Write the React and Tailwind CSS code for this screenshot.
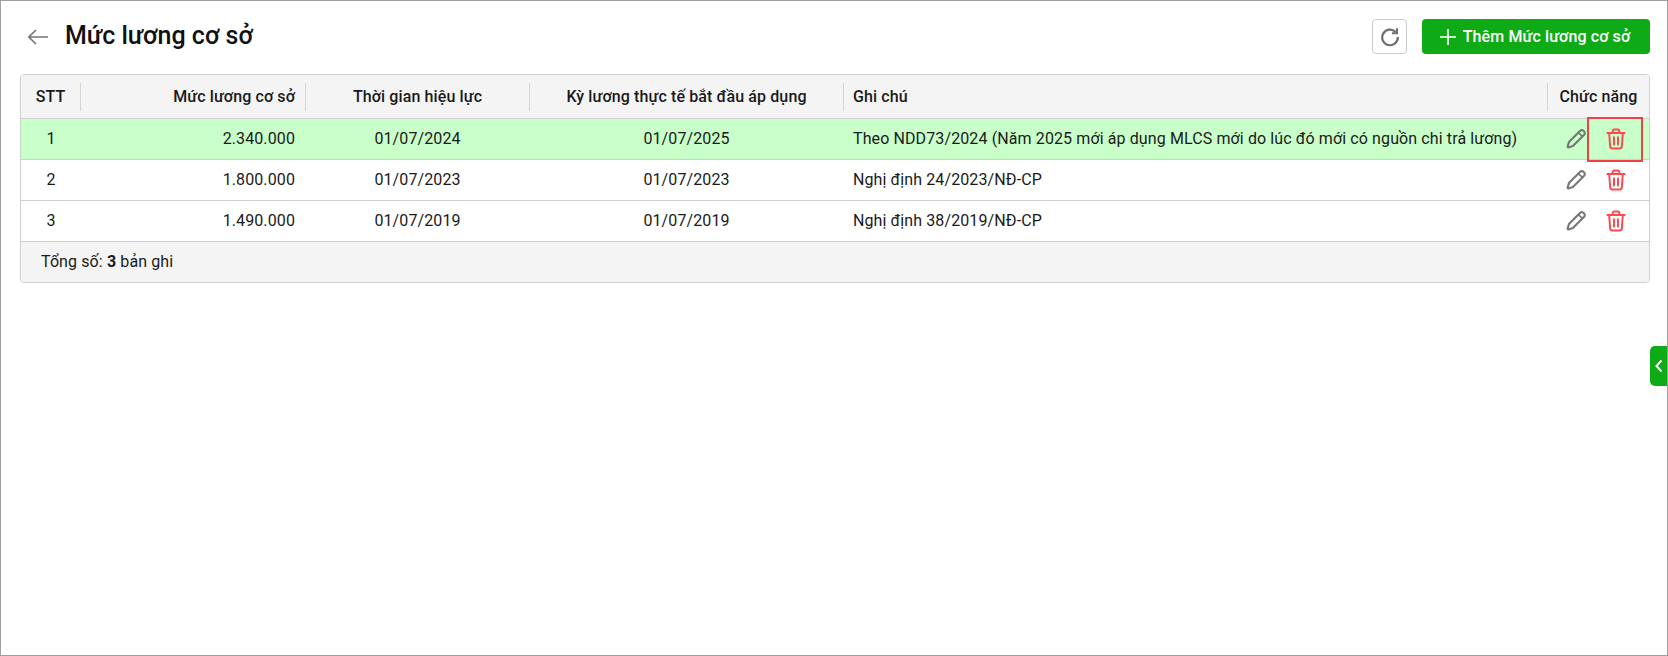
const rows = [
  { stt: 1, luong: "2.340.000", hieuLuc: "01/07/2024", apDung: "01/07/2025", ghiChu: "Theo NDD73/2024 (Năm 2025 mới áp dụng MLCS mới do lúc đó mới có nguồn chi trả lương)" },
  { stt: 2, luong: "1.800.000", hieuLuc: "01/07/2023", apDung: "01/07/2023", ghiChu: "Nghị định 24/2023/NĐ-CP" },
  { stt: 3, luong: "1.490.000", hieuLuc: "01/07/2019", apDung: "01/07/2019", ghiChu: "Nghị định 38/2019/NĐ-CP" },
];

const cols = "grid grid-cols-[60px_225px_224px_314px_704px_1fr]";

function PencilIcon() {
  return (
    <svg width="22" height="22" viewBox="0 0 20 20" fill="none" stroke="#777" strokeWidth="1.9" strokeLinejoin="round">
      <path d="M13.800 2.600a2.100 2.100 0 0 1 3 0l.6.6a2.100 2.100 0 0 1 0 3L7.200 16.400l-4.200 1.300-.7-.7L3.600 12.800z" />
      <path d="M12.300 4.200l3.500 3.500" strokeWidth="1.500" />
    </svg>
  );
}

function TrashIcon() {
  return (
    <svg width="22" height="22" viewBox="0 0 20 20" fill="none" stroke="#fb4a50" strokeWidth="1.8" strokeLinecap="round" strokeLinejoin="round">
      <path d="M2.200 4.600h15.600" />
      <path d="M7 4.400V2.600a1.200 1.200 0 0 1 1.200-1.200h3.600A1.200 1.200 0 0 1 13 2.600v1.800" />
      <path d="M3.800 4.800l.9 12a2 2 0 0 0 2 1.900h6.600a2 2 0 0 0 2-1.900l.9-12" />
      <path d="M8.200 8.400v6.600M11.800 8.400v6.600" />
    </svg>
  );
}

function HeaderCell({ children, className = "", last = false }) {
  return (
    <div className="flex items-center h-full">
      <div className={`flex-1 px-[10px] font-medium text-[#1a1a1a] whitespace-nowrap ${className}`}>
        {children}
      </div>
      {!last && <div className="w-px h-[28px] bg-[#d4d4d4]" />}
    </div>
  );
}

export default function App() {
  return (
    <div className="h-[656px] w-[1668px] bg-white border border-[#a0a0a0] overflow-hidden relative font-['Roboto',sans-serif] text-[16px] tracking-[0.11px] text-[#1a1a1a]">
      <div className="flex items-center h-[73px] pb-[2px] pl-[25px] pr-[17px]">
        <svg width="24" height="24" viewBox="0 0 24 24" fill="none" stroke="#757575" strokeWidth="1.7" className="mr-[15px]">
          <path d="M22 12H2.500M10 5l-7.200 7 7.200 7" />
        </svg>
        <h1 className="font-medium text-[25px] tracking-normal text-[#111] -mt-[2px]">Mức lương cơ sở</h1>
        <button className="ml-auto w-[35px] h-[35px] flex items-center justify-center rounded-[4px] border border-[#ccc] bg-white">
          <svg width="20" height="20" viewBox="0 0 20 20" fill="none" stroke="#6e6e6e" strokeWidth="2.200">
            <path d="M15.600 5A7.800 7.800 0 1 0 17.800 10" />
            <path d="M17 1.200v5h-5" strokeWidth="2" />
          </svg>
        </button>
        <button className="ml-[15px] w-[228px] h-[35px] flex items-center justify-center gap-[7px] pr-[2px] rounded-[4px] bg-[#0fab16] text-white font-medium">
          <svg width="16" height="16" viewBox="0 0 16 16" stroke="white" strokeWidth="1.700">
            <path d="M8 0v16M0 8h16" />
          </svg>
          Thêm Mức lương cơ sở
        </button>
      </div>

      <div className="ml-[19px] mr-[17px] border border-[#cfcfcf] rounded-[4px] overflow-hidden">
        <div className={`${cols} h-[44px] bg-[#f4f4f4] border-b border-[#cfcfcf]`}>
          <HeaderCell className="text-center">STT</HeaderCell>
          <HeaderCell className="text-right">Mức lương cơ sở</HeaderCell>
          <HeaderCell className="text-center">Thời gian hiệu lực</HeaderCell>
          <HeaderCell className="text-center">Kỳ lương thực tế bắt đầu áp dụng</HeaderCell>
          <HeaderCell className="pl-[9px]">Ghi chú</HeaderCell>
          <HeaderCell className="text-center" last>Chức năng</HeaderCell>
        </div>

        {rows.map((row, index) => (
          <div
            key={row.stt}
            className={`${cols} h-[41px] items-center border-b border-[#cfcfcf] ${index === 0 ? "bg-[#c9ffc9]" : "bg-white"}`}
          >
            <div className="px-[10px] text-center">{row.stt}</div>
            <div className="pl-[10px] pr-[11px] text-right">{row.luong}</div>
            <div className="pl-[10px] pr-[11px] text-center">{row.hieuLuc}</div>
            <div className="pl-[10px] pr-[11px] text-center">{row.apDung}</div>
            <div className="pl-[9px] pr-[10px] whitespace-nowrap">{row.ghiChu}</div>
            <div className="flex items-center justify-center gap-[18px] pr-[5px]">
              <PencilIcon />
              <div className="relative">
                <TrashIcon />
                {index === 0 && (
                  <div className="absolute -left-[18px] -top-[11px] w-[56px] h-[45px] border-2 border-[#f2404a]" />
                )}
              </div>
            </div>
          </div>
        ))}

        <div className="h-[40px] flex items-center pl-[20px] bg-[#f4f4f4]">
          Tổng số:&nbsp;<span className="font-bold">3</span>&nbsp;bản ghi
        </div>
      </div>

      <div className="absolute right-0 top-[345px] w-[17px] h-[40px] bg-[#0fab16] rounded-l-[5px] flex items-center justify-center">
        <svg width="10" height="14" viewBox="0 0 10 14" fill="none" stroke="white" strokeWidth="2">
          <path d="M7.500 1.500L2.500 7l5 5.500" />
        </svg>
      </div>
    </div>
  );
}
